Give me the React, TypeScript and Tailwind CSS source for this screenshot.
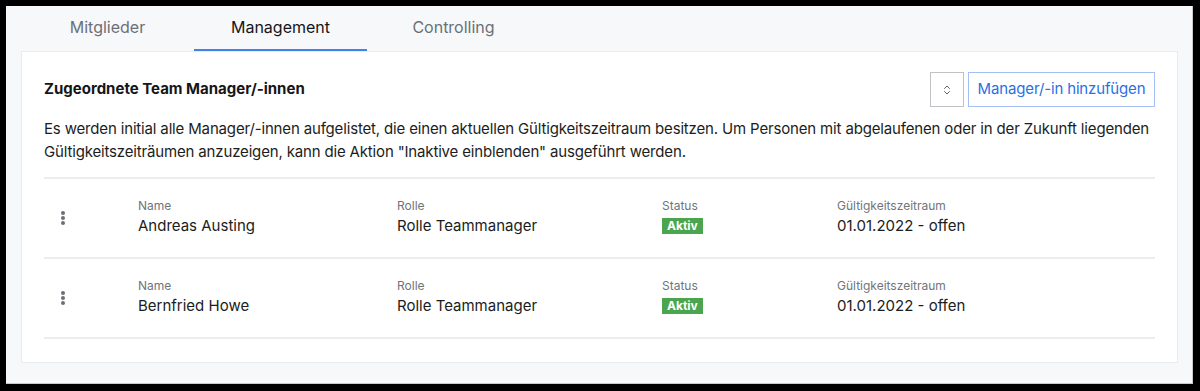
import { ChevronsUpDown } from "lucide-react";

const rows = [
  { name: "Andreas Austing", role: "Rolle Teammanager", period: "01.01.2022 - offen" },
  { name: "Bernfried Howe", role: "Rolle Teammanager", period: "01.01.2022 - offen" },
];

function Field({ label, children, width }: { label: string; children: React.ReactNode; width: string }) {
  return (
    <div className={`flex flex-col ${width}`}>
      <span className="text-[12px] leading-[18px] text-[#70757c]">{label}</span>
      <div className="text-[15px] leading-[22px] text-[#1b1d21]">{children}</div>
    </div>
  );
}

export default function App() {
  return (
    <div
      className="w-[1200px] h-[391px] bg-black pt-[6px] pl-[6px] pr-[7px] pb-[7px]"
      style={{ fontFamily: "Inter, 'Noto Sans', sans-serif" }}
    >
      <div className="h-full bg-[#f7f8fa] border-r border-b border-[#c9cbce] pl-[15px] pr-[14px] flex flex-col">
        {/* tabs */}
        <div className="flex h-[45px]">
          {["Mitglieder", "Management", "Controlling"].map((t, i) => (
            <div
              key={t}
              className={`w-[173px] flex items-center justify-center text-[16px] border-b-2 pb-[2px] ${
                i === 1 ? "text-[#141619] border-[#3f82ea]" : "text-[#6b7078] border-transparent"
              }`}
            >
              {t}
            </div>
          ))}
        </div>

        {/* card */}
        <div className="bg-white border border-[#e9ebee] px-[22px] pt-[20px] pb-[23px]">
          <div className="flex items-center justify-between">
            <h2 className="text-[15px] font-bold text-[#141619]">Zugeordnete Team Manager/-innen</h2>
            <div className="flex gap-[4px]">
              <button className="w-[34px] h-[35px] border border-[#bfc1c4] bg-white flex items-center justify-center text-[#5f646b]">
                <ChevronsUpDown size={12} strokeWidth={2} />
              </button>
              <button className="h-[35px] w-[187px] border border-[#a3bff5] bg-white text-[15px] tracking-[-0.15px] text-[#2c6fe3]">
                Manager/-in hinzufügen
              </button>
            </div>
          </div>

          <p className="mt-[10px] text-[15px] leading-[23px] tracking-[-0.16px] text-[#1b1d21]">
            Es werden initial alle Manager/-innen aufgelistet, die einen aktuellen Gültigkeitszeitraum besitzen. Um Personen mit abgelaufenen oder in der Zukunft liegenden Gültigkeitszeiträumen anzuzeigen, kann die Aktion "Inaktive einblenden" ausgeführt werden.
          </p>

          <div className="mt-[14px] border-t-2 border-[#ebecee]">
            {rows.map((r) => (
              <div key={r.name} className="flex items-center border-b-2 border-[#ebecee] pt-[18px] pb-[20px]">
                <div className="w-[94px] pl-[17px] flex flex-col gap-[1px] pt-[2px]">
                  <span className="w-[4px] h-[4px] rounded-full bg-[#6b7078]" />
                  <span className="w-[4px] h-[4px] rounded-full bg-[#6b7078]" />
                  <span className="w-[4px] h-[4px] rounded-full bg-[#6b7078]" />
                </div>
                <Field label="Name" width="w-[259px]">{r.name}</Field>
                <Field label="Rolle" width="w-[265px]">{r.role}</Field>
                <Field label="Status" width="w-[175px]">
                  <span className="inline-flex items-center h-[16px] px-[5px] mt-[3px] bg-[#4aa54e] text-white text-[12px] font-bold leading-none align-top">
                    Aktiv
                  </span>
                </Field>
                <Field label="Gültigkeitszeitraum" width="flex-1">{r.period}</Field>
              </div>
            ))}
          </div>
        </div>
      </div>
    </div>
  );
}
